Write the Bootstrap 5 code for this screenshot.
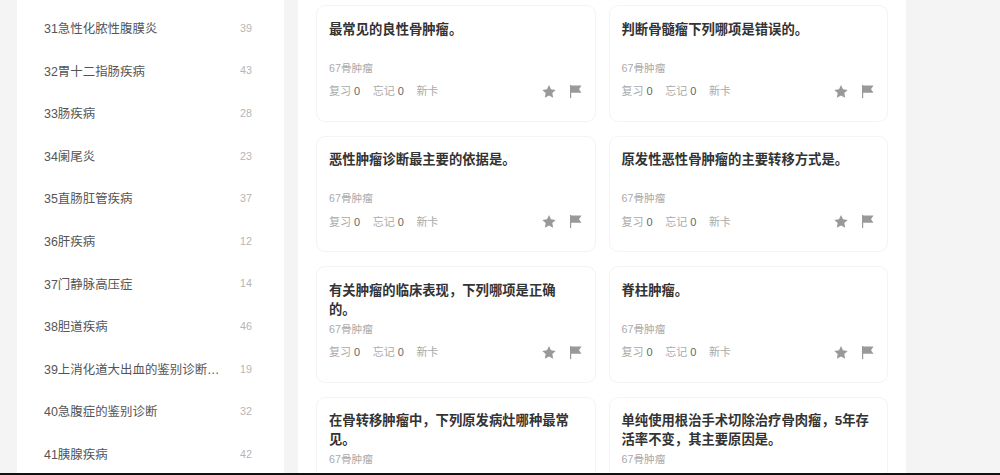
<!DOCTYPE html>
<html lang="zh-CN">
  <head>
    <meta charset="UTF-8" />
    <title>题库</title>
    <link
      rel="stylesheet"
      href="https://cdn.jsdelivr.net/npm/bootstrap@5.3.0/dist/css/bootstrap.min.css"
    />
    <style>
      html,
      body {
        height: 475px;
        overflow: hidden;
      }
      body {
        background: #f4f4f4;
        font-family: "Liberation Sans", "Noto Sans CJK SC", sans-serif;
      }
      .page-wrap {
        height: 473px;
        overflow: hidden;
        padding-left: 17px;
        gap: 14px;
      }
      .bottom-bar {
        height: 2px;
        background: #111;
      }
      .side-panel {
        width: 267px;
        height: 473px;
        background: #fff;
        padding-top: 8px;
      }
      .side-item {
        height: 42.6px;
        padding: 0 32px 0 27px;
        border: 0;
        font-size: 12.45px;
        color: #555;
      }
      .side-name {
        width: 178px;
      }
      .side-count {
        margin-bottom: 3px;
        font-size: 10.7px;
        color: #b5b5b5;
      }
      .main-panel {
        width: 608px;
        height: 473px;
        background: #fff;
        padding: 5.2px 18px 0;
      }
      .card-grid {
        display: grid;
        grid-template-columns: 279.5px 279.5px;
        gap: 14px 13px;
      }
      .q-card {
        height: 116.5px;
        border: 1px solid #f4f4f4;
        border-radius: 9px;
        padding: 13.5px 13px 0 12px;
      }
      .q-title {
        height: 38px;
        margin: 0;
        padding-right: 2px;
        font-size: 13.33px;
        line-height: 19px;
        font-weight: 700;
        color: #333;
      }
      .q-meta {
        margin-top: 1px;
        font-size: 10.7px;
        line-height: 18px;
        color: #aaa;
      }
      .q-stats {
        margin-top: 6px;
        height: 18px;
        font-size: 11px;
        color: #aaa;
      }
      .q-stats b {
        font-weight: 400;
        color: #666;
      }
      .stats-left {
        gap: 12.5px;
      }
      .q-icons {
        gap: 13px;
        color: #999;
      }
    </style>
  </head>
  <body>
    <div class="page-wrap d-flex">
      <div class="side-panel">
        <div id="sideList" class="list-group list-group-flush"></div>
      </div>
      <div class="main-panel">
        <div id="cardGrid" class="card-grid"></div>
      </div>
    </div>
    <div class="bottom-bar"></div>

    <script src="https://cdn.jsdelivr.net/npm/bootstrap@5.3.0/dist/js/bootstrap.bundle.min.js"></script>
    <script>
      const chapters = [
        ["31急性化脓性腹膜炎", 39],
        ["32胃十二指肠疾病", 43],
        ["33肠疾病", 28],
        ["34阑尾炎", 23],
        ["35直肠肛管疾病", 37],
        ["36肝疾病", 12],
        ["37门静脉高压症", 14],
        ["38胆道疾病", 46],
        ["39上消化道大出血的鉴别诊断…", 19],
        ["40急腹症的鉴别诊断", 32],
        ["41胰腺疾病", 42],
      ];

      const questions = [
        "最常见的良性骨肿瘤。",
        "判断骨髓瘤下列哪项是错误的。",
        "恶性肿瘤诊断最主要的依据是。",
        "原发性恶性骨肿瘤的主要转移方式是。",
        "有关肿瘤的临床表现，下列哪项是正确的。",
        "脊柱肿瘤。",
        "在骨转移肿瘤中，下列原发病灶哪种最常见。",
        "单纯使用根治手术切除治疗骨肉瘤，5年存活率不变，其主要原因是。",
      ];

      const starIcon = `<svg width="14" height="14" viewBox="0 0 14 14" fill="currentColor"><path d="M7 0l2 4.3 4.7.6-3.4 3.2.9 4.7L7 10.5l-4.2 2.3.9-4.7L.3 4.9 5 4.3z"/></svg>`;
      const flagIcon = `<svg width="13" height="14" viewBox="0 0 13 14" fill="currentColor"><path d="M1 0h1.2v13H1zM2.2 .6h10.3L10 4.2l2.5 3.6H2.2z"/></svg>`;

      // the last row runs past the bottom of the window, its stats never show
      const statsRow = `
            <div class="q-stats d-flex align-items-center justify-content-between">
              <div class="d-flex stats-left">
                <span>复习 <b>0</b></span>
                <span>忘记 <b>0</b></span>
                <span>新卡</span>
              </div>
              <div class="q-icons d-flex align-items-center">${starIcon}${flagIcon}</div>
            </div>`;

      document.getElementById("sideList").innerHTML = chapters
        .map(
          (c) => `
          <div class="list-group-item side-item d-flex align-items-center justify-content-between">
            <span class="side-name text-truncate">${c[0]}</span>
            <span class="side-count">${c[1]}</span>
          </div>`
        )
        .join("");

      document.getElementById("cardGrid").innerHTML = questions
        .map(
          (q, i) => `
          <div class="card q-card">
            <h6 class="q-title">${q}</h6>
            <div class="q-meta">67骨肿瘤</div>${i < 6 ? statsRow : ""}
          </div>`
        )
        .join("");
    </script>
  </body>
</html>
